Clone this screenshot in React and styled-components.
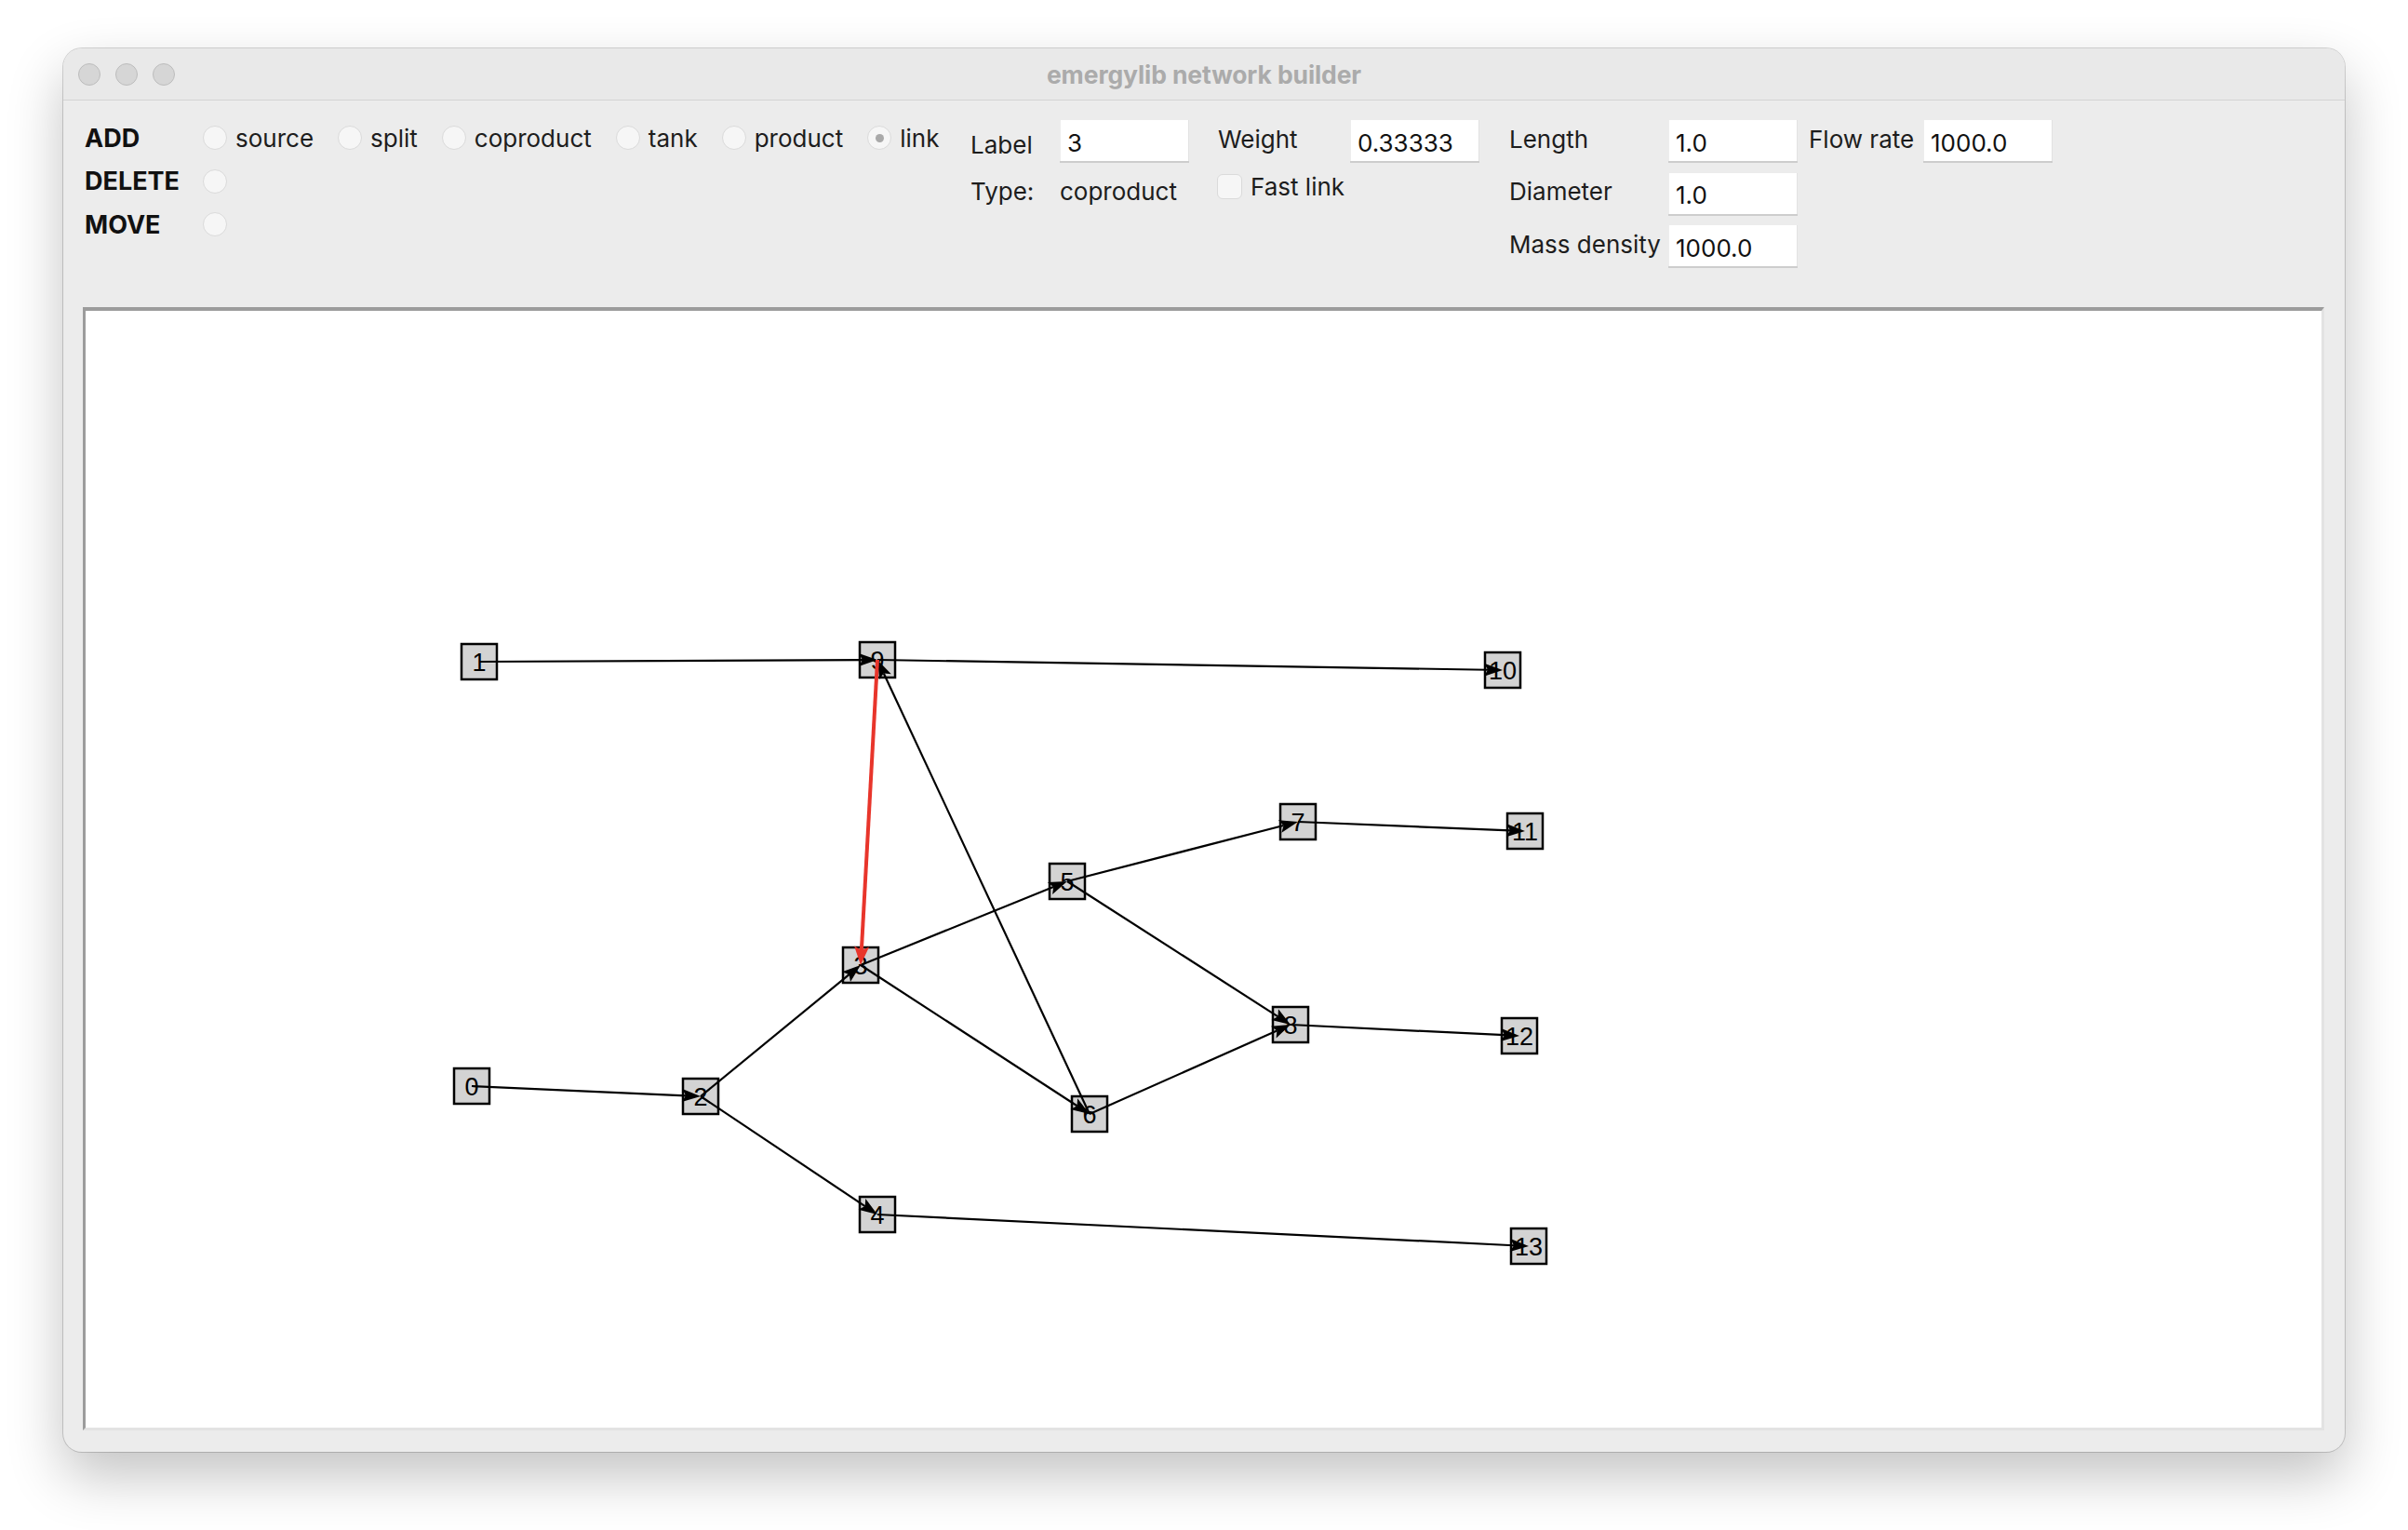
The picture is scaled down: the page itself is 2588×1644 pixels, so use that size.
import React from 'react';
import styled, { createGlobalStyle } from 'styled-components';

const GlobalStyle = createGlobalStyle`
  html, body {
    margin: 0;
    padding: 0;
    background: #ffffff;
  }
  body {
    width: 2588px;
    height: 1644px;
    overflow: hidden;
    font-family: Inter, "Liberation Sans", sans-serif;
    color: #1d1d1d;
  }
`;

// node centres in page pixels, canvas origin subtracted when drawing
const NODES = {
    0: [507, 1167],
    1: [515, 711],
    2: [753, 1178],
    3: [925, 1037],
    4: [943, 1305],
    5: [1147, 947],
    6: [1171, 1197],
    7: [1395, 883],
    8: [1387, 1101],
    9: [943, 709],
    10: [1615, 720],
    11: [1639, 893],
    12: [1633, 1113],
    13: [1643, 1339],
};

const LINKS = [
    [1, 9], [9, 10], [6, 9], [0, 2], [2, 3], [2, 4], [3, 5], [3, 6],
    [5, 7], [5, 8], [6, 8], [7, 11], [8, 12], [4, 13], [9, 3, true],
];

const OX = 92;
const OY = 334;

const NODE_TYPES = ['source', 'split', 'coproduct', 'tank', 'product', 'link'];

const arrowGeometry = (from, to, selected) => {
    const [x1, y1] = [NODES[from][0] - OX, NODES[from][1] - OY];
    const [x2, y2] = [NODES[to][0] - OX, NODES[to][1] - OY];
    const len = Math.hypot(x2 - x1, y2 - y1);
    const ux = (x2 - x1) / len;
    const uy = (y2 - y1) / len;
    const nx = -uy;
    const ny = ux;
    const wing = selected ? 8 : 7;
    const neck = [x2 - 16 * ux, y2 - 16 * uy];
    const back = [x2 - 20 * ux, y2 - 20 * uy];
    const head = [
        [x2, y2],
        [back[0] + wing * nx, back[1] + wing * ny],
        neck,
        [back[0] - wing * nx, back[1] - wing * ny],
    ].map(p => p.join(',')).join(' ');
    return { x1, y1, x2: neck[0], y2: neck[1], head };
};

const App = () => {
    return (
        <Page>
            <GlobalStyle />
            <Window>
                <TitleBar>
                    <Lights>
                        <Light />
                        <Light />
                        <Light />
                    </Lights>
                    <Title>emergylib network builder</Title>
                    <div />
                </TitleBar>
                <Body>
                    <Toolbar>
                        <ModeGrid>
                            <ModeLabel>ADD</ModeLabel>
                            <RadioRow>
                                {NODE_TYPES.map(type => (
                                    <RadioItem key={type}>
                                        <Radio $checked={type === 'link'} />
                                        <span>{type}</span>
                                    </RadioItem>
                                ))}
                            </RadioRow>
                            <ModeLabel>DELETE</ModeLabel>
                            <RadioRow>
                                <Radio />
                            </RadioRow>
                            <ModeLabel>MOVE</ModeLabel>
                            <RadioRow>
                                <Radio />
                            </RadioRow>
                        </ModeGrid>

                        <FieldGrid $cols="96px 139px">
                            <FieldLabel $shift={3}>Label</FieldLabel>
                            <Field readOnly value="3" />
                            <FieldLabel>Type:</FieldLabel>
                            <FieldLabel>coproduct</FieldLabel>
                        </FieldGrid>

                        <FieldGrid $cols="142px 139px" $gap="31px">
                            <FieldLabel>Weight</FieldLabel>
                            <Field readOnly value="0.33333" />
                            <CheckRow>
                                <Check />
                                <span>Fast link</span>
                            </CheckRow>
                        </FieldGrid>

                        <FieldGrid $cols="171px 139px 135px 139px" $gap="32px">
                            <FieldLabel>Length</FieldLabel>
                            <Field readOnly value="1.0" />
                            <FieldLabel $pad="12px">Flow rate</FieldLabel>
                            <Field readOnly value="1000.0" />
                            <FieldLabel>Diameter</FieldLabel>
                            <Field readOnly value="1.0" />
                            <span />
                            <span />
                            <FieldLabel>Mass density</FieldLabel>
                            <Field readOnly value="1000.0" />
                        </FieldGrid>
                    </Toolbar>

                    <Canvas>
                        <Diagram>
                            {Object.entries(NODES).map(([id, [cx, cy]]) => (
                                <g key={id}>
                                    <NodeBox x={cx - OX - 19} y={cy - OY - 19} width={38} height={38} />
                                    <NodeText x={cx - OX} y={cy - OY + 1}>{id}</NodeText>
                                </g>
                            ))}
                            {LINKS.map(([from, to, selected]) => {
                                const a = arrowGeometry(from, to, selected);
                                return (
                                    <g key={`${from}-${to}`}>
                                        <LinkLine $selected={selected} x1={a.x1} y1={a.y1} x2={a.x2} y2={a.y2} />
                                        <ArrowHead $selected={selected} points={a.head} />
                                    </g>
                                );
                            })}
                        </Diagram>
                    </Canvas>
                </Body>
            </Window>
        </Page>
    );
};

const Page = styled.div`
    padding: 52px 0 0 68px;
`;

const Window = styled.div`
    width: 2452px;
    height: 1508px;
    background: #ececec;
    border-radius: 20px;
    overflow: hidden;
    display: flex;
    flex-direction: column;
    box-shadow: 0 0 0 1px rgba(0, 0, 0, 0.16), 0 26px 60px rgba(0, 0, 0, 0.24);
`;

const TitleBar = styled.div`
    height: 55px;
    flex: none;
    display: grid;
    grid-template-columns: 1fr auto 1fr;
    align-items: center;
    padding: 0 16px;
    background: #e9e9e9;
    border-bottom: 1px solid #d3d3d3;
`;

const Lights = styled.div`
    display: flex;
    gap: 16px;
`;

const Light = styled.div`
    width: 24px;
    height: 24px;
    box-sizing: border-box;
    border-radius: 50%;
    background: #d6d6d6;
    border: 1px solid #bcbcbc;
`;

const Title = styled.div`
    font-size: 26.5px;
    font-weight: 700;
    color: #ababab;
    letter-spacing: -0.1px;
`;

const Body = styled.div`
    flex: 1;
    display: flex;
    flex-direction: column;
    padding: 0 22px 23px 21px;
    min-height: 0;
`;

const Toolbar = styled.div`
    height: 222px;
    flex: none;
    display: flex;
    align-items: flex-start;
    padding-left: 2px;
    font-size: 26px;
`;

const ModeGrid = styled.div`
    width: 952px;
    flex: none;
    margin-top: 17px;
    display: grid;
    grid-template-columns: 127px 1fr;
    grid-auto-rows: 46.5px;
    align-items: center;
`;

const ModeLabel = styled.div`
    font-weight: 700;
    font-size: 27px;
    color: #111;
`;

const RadioRow = styled.div`
    display: flex;
    align-items: center;
    gap: 26px;
`;

const RadioItem = styled.label`
    display: flex;
    align-items: center;
    gap: 9px;
    color: #1d1d1d;
`;

const Radio = styled.span`
    width: 26px;
    height: 26px;
    box-sizing: border-box;
    border-radius: 50%;
    background: #f6f6f6;
    border: 1px solid #dadada;
    display: flex;
    align-items: center;
    justify-content: center;

    &::after {
        content: '';
        display: ${p => (p.$checked ? 'block' : 'none')};
        width: 9px;
        height: 9px;
        border-radius: 50%;
        background: #a9a9a9;
    }
`;

const FieldGrid = styled.div`
    flex: none;
    margin-top: 21px;
    margin-left: ${p => p.$gap || '0'};
    display: grid;
    grid-template-columns: ${p => p.$cols};
    grid-auto-rows: 46px;
    row-gap: 10.5px;
    align-items: center;
`;

const FieldLabel = styled.div`
    padding-left: ${p => p.$pad || '0'};
    white-space: nowrap;
    color: #1d1d1d;
    transform: translateY(${p => (p.$shift ?? -3)}px);
`;

const Field = styled.input`
    width: 139px;
    height: 46px;
    box-sizing: border-box;
    border: none;
    outline: none;
    margin: 0;
    padding: 2px 8px 0;
    background: #ffffff;
    box-shadow: inset 0 -2px 0 #cdcdcd, inset -1px 0 0 #e2e2e2, inset 1px 0 0 #ededed;
    font-family: Inter, "Liberation Sans", sans-serif;
    font-size: 26px;
    color: #111;
`;

const CheckRow = styled.label`
    grid-column: 1 / span 2;
    align-self: start;
    display: flex;
    align-items: center;
    gap: 9px;
    height: 30px;
    margin-left: -1px;
    color: #1d1d1d;
`;

const Check = styled.span`
    width: 27px;
    height: 27px;
    box-sizing: border-box;
    border-radius: 6px;
    background: #f6f6f6;
    border: 1px solid #dadada;
`;

const Canvas = styled.div`
    flex: 1;
    min-height: 0;
    background: #ffffff;
    border-style: solid;
    border-width: 4px 3px 3px 3px;
    border-color: #9c9c9c #e3e3e3 #e3e3e3 #9c9c9c;
`;

const Diagram = styled.svg`
    display: block;
    width: 100%;
    height: 100%;
`;

const NodeBox = styled.rect`
    fill: #d3d3d3;
    stroke: #000;
    stroke-width: 2.5px;
`;

const NodeText = styled.text`
    font-family: "Liberation Sans", Arial, sans-serif;
    font-size: 27px;
    fill: #000;
    text-anchor: middle;
    dominant-baseline: central;
`;

const LinkLine = styled.line`
    stroke: ${p => (p.$selected ? '#e8352b' : '#000')};
    stroke-width: ${p => (p.$selected ? 4 : 2.2)}px;
`;

const ArrowHead = styled.polygon`
    fill: ${p => (p.$selected ? '#e8352b' : '#000')};
`;

export default App;
